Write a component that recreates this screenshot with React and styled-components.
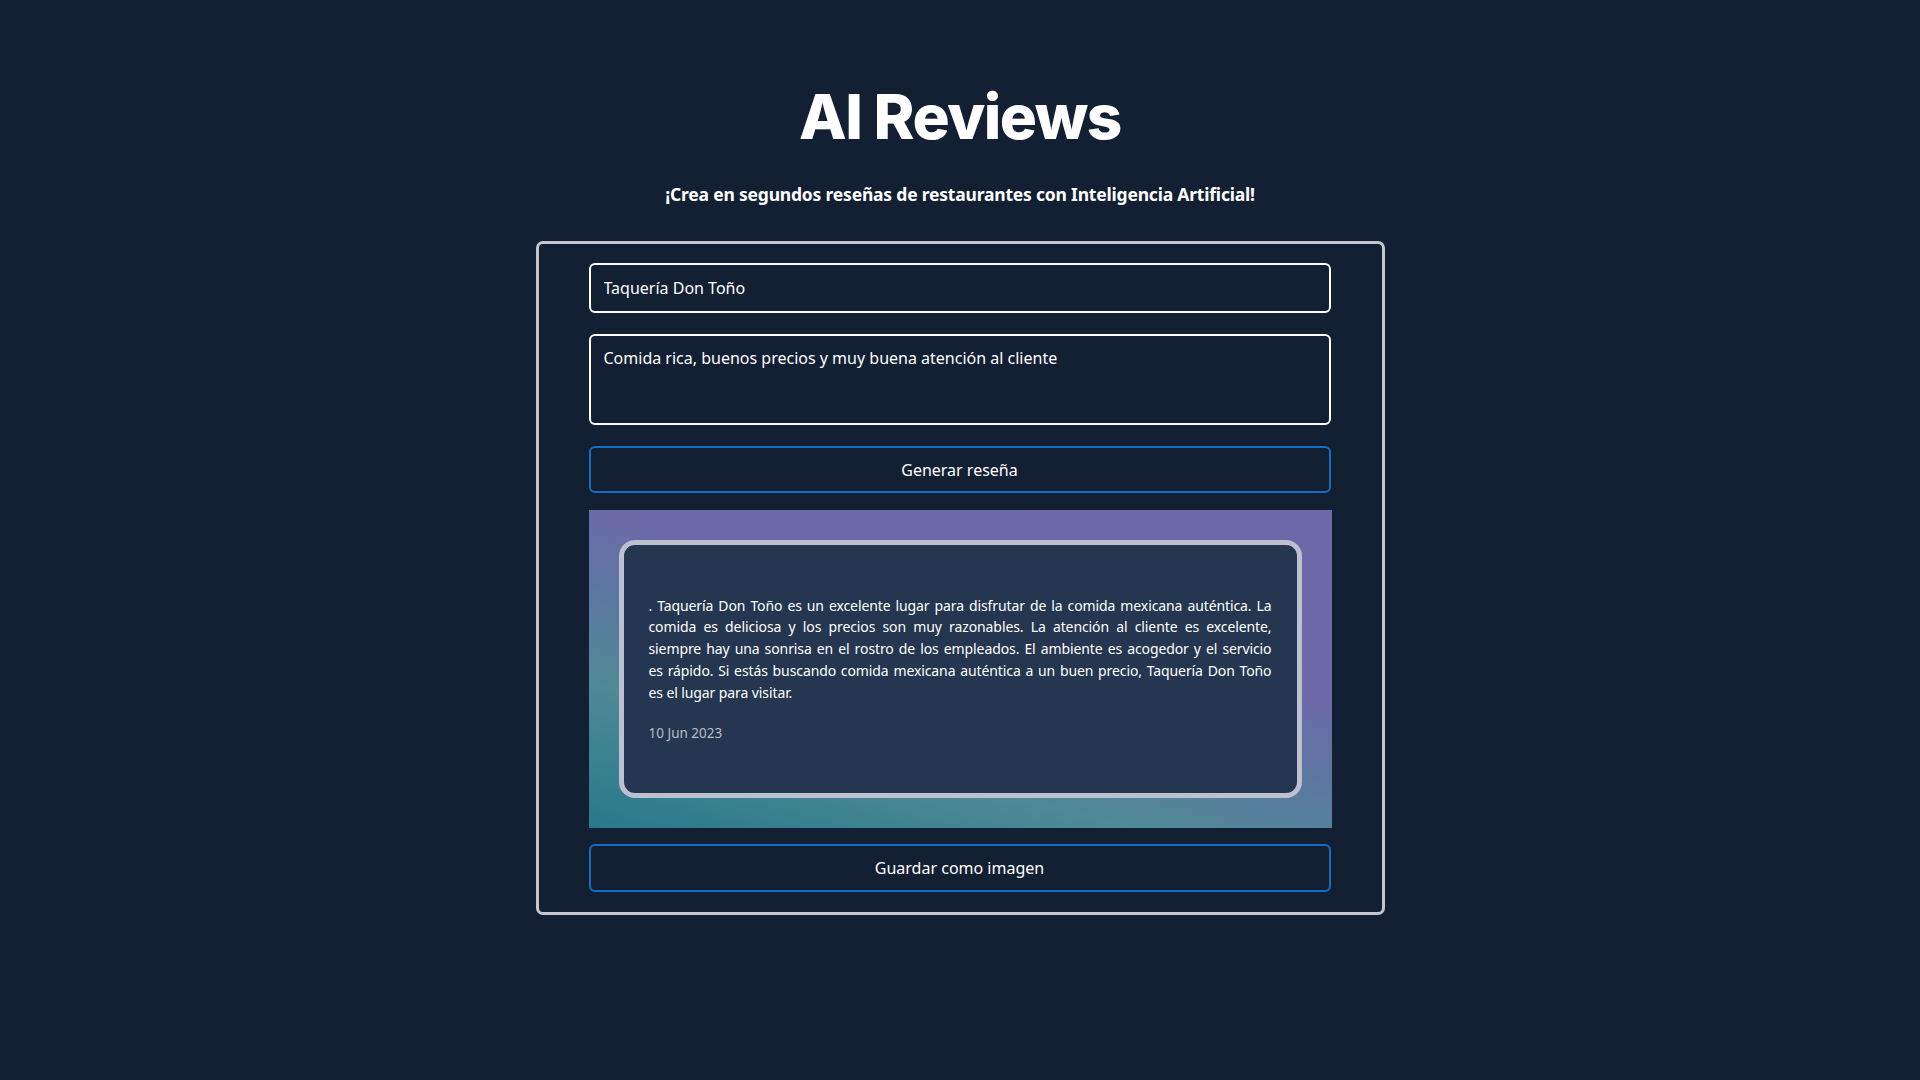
import React from "react";
import styled, { createGlobalStyle } from "styled-components";

const Global = createGlobalStyle`
  html, body { margin: 0; padding: 0; background: #131f33; }
  body { font-family: "Noto Sans", "Open Sans", sans-serif; color: #fff; }
  * { box-sizing: border-box; }
`;

const Page = styled.main`
  min-height: 1080px;
  display: flex;
  flex-direction: column;
  align-items: center;
  padding-top: 80px;
`;

const Title = styled.h1`
  margin: 0;
  font-family: Inter, "Noto Sans", sans-serif;
  font-weight: 800;
  font-size: 62px;
  line-height: 74px;
  letter-spacing: -1.5px;
  color: #fff;
`;

const Subtitle = styled.p`
  margin: 25px 0 32px;
  font-size: 17.5px;
  line-height: 30px;
  font-weight: 700;
  letter-spacing: -0.2px;
`;

const Panel = styled.section`
  width: 849px;
  border: 3px solid #c4c6cc;
  border-radius: 7px;
  padding: 19px 50px 20px;
  display: flex;
  flex-direction: column;
`;

const field = `
  width: 742px;
  background: transparent;
  color: #fff;
  border: 2px solid #ffffff;
  border-radius: 6px;
  font-family: "Noto Sans", sans-serif;
  font-size: 16px;
  outline: none;
`;

const Input = styled.input`
  ${field}
  height: 50px;
  padding: 0 13px;
`;

const TextArea = styled.textarea`
  ${field}
  height: 91px;
  margin-top: 21px;
  padding: 12px 13px;
  line-height: 20px;
  resize: none;
`;

const ActionButton = styled.button`
  width: 742px;
  height: ${(p) => p.$h || 47}px;
  margin-top: ${(p) => p.$mt}px;
  background: transparent;
  color: #fff;
  border: 2px solid #1170c6;
  border-radius: 6px;
  font-family: "Noto Sans", sans-serif;
  font-size: 16px;
  cursor: pointer;
`;

const Frame = styled.div`
  margin-top: 17px;
  height: 318px;
  padding: 30px;
  background: linear-gradient(15deg, #27798a 0%, #4f8a95 28%, #5e76a2 48%, #6c6aa8 62%, #6e69a8 100%);
`;

const Card = styled.article`
  height: 258px;
  border: 5px solid rgba(230, 232, 245, 0.78);
  border-radius: 16px;
  background: #253650;
  padding: 0 25px;
  display: flex;
  flex-direction: column;
  justify-content: center;
`;

const ReviewText = styled.p`
  margin: 0;
  font-size: 14px;
  letter-spacing: -0.1px;
  line-height: 21.7px;
  color: #fff;
`;

const Line = styled.span`
  display: block;
  white-space: nowrap;
  text-align: ${(p) => (p.$last ? "left" : "justify")};
  text-align-last: ${(p) => (p.$last ? "left" : "justify")};
`;

const DateText = styled.span`
  margin-top: 20px;
  font-size: 13.5px;
  line-height: 20px;
  color: #b9bdc6;
`;

const reviewLines = [
  ". Taquería Don Toño es un excelente lugar para disfrutar de la comida mexicana auténtica. La",
  "comida es deliciosa y los precios son muy razonables. La atención al cliente es excelente,",
  "siempre hay una sonrisa en el rostro de los empleados. El ambiente es acogedor y el servicio",
  "es rápido. Si estás buscando comida mexicana auténtica a un buen precio, Taquería Don Toño",
  "es el lugar para visitar.",
];

export default function App() {
  return (
    <>
      <Global />
      <Page>
        <Title>AI Reviews</Title>
        <Subtitle>¡Crea en segundos reseñas de restaurantes con Inteligencia Artificial!</Subtitle>
        <Panel>
          <Input defaultValue="Taquería Don Toño" />
          <TextArea defaultValue="Comida rica, buenos precios y muy buena atención al cliente" />
          <ActionButton $mt={21}>Generar reseña</ActionButton>
          <Frame>
            <Card>
              <ReviewText>
                {reviewLines.map((l, i) => (
                  <Line key={i} $last={i === reviewLines.length - 1}>
                    {l}
                  </Line>
                ))}
              </ReviewText>
              <DateText>10 Jun 2023</DateText>
            </Card>
          </Frame>
          <ActionButton $mt={16} $h={48}>Guardar como imagen</ActionButton>
        </Panel>
      </Page>
    </>
  );
}
